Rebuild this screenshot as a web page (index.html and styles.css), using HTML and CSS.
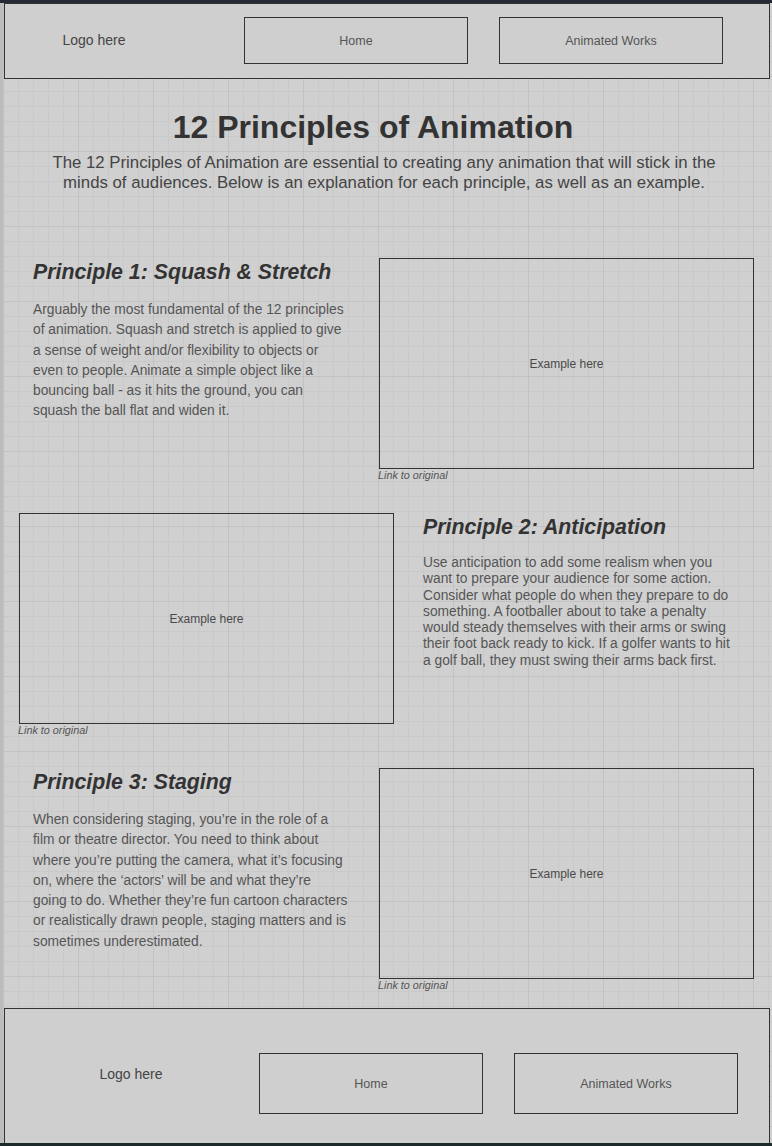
FILE: index.html
```html
<!DOCTYPE html>
<html lang="en">
<head>
  <meta charset="UTF-8">
  <title>12 Principles of Animation</title>
  <meta name="viewport" content="width=device-width, initial-scale=1.0">
  <link rel="stylesheet" href="styles.css">
</head>
<body>
  <div class="page">
    <!-- Header -->
    <header class="site-header">
      <div class="logo">Logo here</div>
      <nav class="nav">
        <a href="#home" class="nav-link">Home</a>
        <a href="#works" class="nav-link">Animated Works</a>
      </nav>
    </header>

    <main class="content">
      <h1 class="page-title">12 Principles of Animation</h1>
      <p class="intro">The 12 Principles of Animation are essential to creating any animation that will stick in the minds of audiences. Below is an explanation for each principle, as well as an example.</p>

      <!-- Principle 1 -->
      <section class="principle">
        <div class="principle-text">
          <h2>Principle 1: Squash &amp; Stretch</h2>
          <p class="spaced">Arguably the most fundamental of the 12 principles of animation. Squash and stretch is applied to give a sense of weight and/or flexibility to objects or even to people. Animate a simple object like a bouncing ball - as it hits the ground, you can squash the ball flat and widen it.</p>
        </div>
        <div class="example">
          <div class="example-box">Example here</div>
          <a href="#" class="source-link">Link to original</a>
        </div>
      </section>

      <!-- Principle 2 -->
      <section class="principle reverse">
        <div class="example">
          <div class="example-box">Example here</div>
          <a href="#" class="source-link">Link to original</a>
        </div>
        <div class="principle-text">
          <h2>Principle 2: Anticipation</h2>
          <p>Use anticipation to add some realism when you want to prepare your audience for some action. Consider what people do when they prepare to do something. A footballer about to take a penalty would steady themselves with their arms or swing their foot back ready to kick. If a golfer wants to hit a golf ball, they must swing their arms back first.</p>
        </div>
      </section>

      <!-- Principle 3 -->
      <section class="principle">
        <div class="principle-text">
          <h2>Principle 3: Staging</h2>
          <p class="spaced">When considering staging, you’re in the role of a film or theatre director. You need to think about where you’re putting the camera, what it’s focusing on, where the ‘actors’ will be and what they’re going to do. Whether they’re fun cartoon characters or realistically drawn people, staging matters and is sometimes underestimated.</p>
        </div>
        <div class="example">
          <div class="example-box">Example here</div>
          <a href="#" class="source-link">Link to original</a>
        </div>
      </section>
    </main>

    <!-- Footer -->
    <footer class="site-footer">
      <div class="logo">Logo here</div>
      <nav class="nav">
        <a href="#home" class="nav-link">Home</a>
        <a href="#works" class="nav-link">Animated Works</a>
      </nav>
    </footer>
  </div>
</body>
</html>
```

FILE: styles.css
```css
/* General Layout */
html {
  background: #bcbcbc;
}

body {
  font-family: "Liberation Sans", Arial, sans-serif;
  margin: 0;
  padding: 0;
  border-top: 3px solid #262a33;
  border-bottom: 3px solid #1b2b2b;
}

.page {
  margin-left: 3px;
  background-color: #d0d0d0;
  background-image:
    linear-gradient(to right, #c2c2c2 1px, transparent 1px),
    linear-gradient(to bottom, #c2c2c2 1px, transparent 1px),
    linear-gradient(to right, #c9c9c9 1px, transparent 1px),
    linear-gradient(to bottom, #c9c9c9 1px, transparent 1px);
  background-size: 75px 75px, 75px 75px, 15px 15px, 15px 15px;
  background-position: 0 -2px;
}

a {
  color: inherit;
  text-decoration: none;
}

/* Header and footer */
.site-header,
.site-footer {
  display: flex;
  align-items: center;
  margin: 0 2px 0 1px;
  border: 1px solid #333;
  background: #cfcfcf;
  color: #444;
}

.site-header {
  height: 74px;
}

.site-header .logo {
  width: 178px;
  text-align: center;
  font-size: 14px;
  margin-top: -3px;
}

.site-header .nav {
  margin-left: 61px;
  margin-top: -1px;
}

.nav {
  display: flex;
  gap: 31px;
}

.nav-link {
  display: flex;
  align-items: center;
  justify-content: center;
  width: 222px;
  height: 45px;
  border: 1px solid #333;
  font-size: 12.5px;
  color: #555;
}

.site-footer {
  height: 134px;
  align-items: flex-start;
  border-bottom: none;
}

.site-footer .logo {
  width: 252px;
  text-align: center;
  font-size: 14px;
  margin-top: 57px;
}

.site-footer .nav {
  margin-left: 2px;
  margin-top: 44px;
}

.site-footer .nav-link {
  height: 59px;
}

/* Main content */
.content {
  padding: 30px 15px 0 16px;
  height: 899px;
}

.page-title {
  margin: 0;
  padding-right: 30px;
  text-align: center;
  font-size: 32px;
  color: #333;
}

.intro {
  margin: 7px 39px 0 31px;
  text-align: center;
  font-size: 16.8px;
  line-height: 20px;
  color: #444;
}

.principle {
  display: grid;
  grid-template-columns: 360px 375px;
  margin-top: 65px;
}

.principle + .principle {
  margin-top: 31px;
}

.principle.reverse {
  grid-template-columns: 375px 360px;
}

.principle-text {
  padding-left: 14px;
  width: 315px;
  color: #555;
}

.reverse .principle-text {
  padding-left: 29px;
}

.principle-text h2 {
  margin: 2px 0 0;
  font-size: 21.3px;
  font-style: italic;
  color: #333;
}

.principle-text p {
  margin: 15px 0 0;
  font-size: 13.8px;
  line-height: 16.3px;
}

.principle-text p.spaced {
  line-height: 20.3px;
  margin-top: 15px;
}

.example-box {
  display: flex;
  align-items: center;
  justify-content: center;
  height: 209px;
  border: 1px solid #333;
  font-size: 12px;
  color: #4a4a4a;
}

.source-link {
  display: block;
  margin-left: -1px;
  font-size: 10.8px;
  font-style: italic;
  color: #555;
  line-height: 13px;
}
```
